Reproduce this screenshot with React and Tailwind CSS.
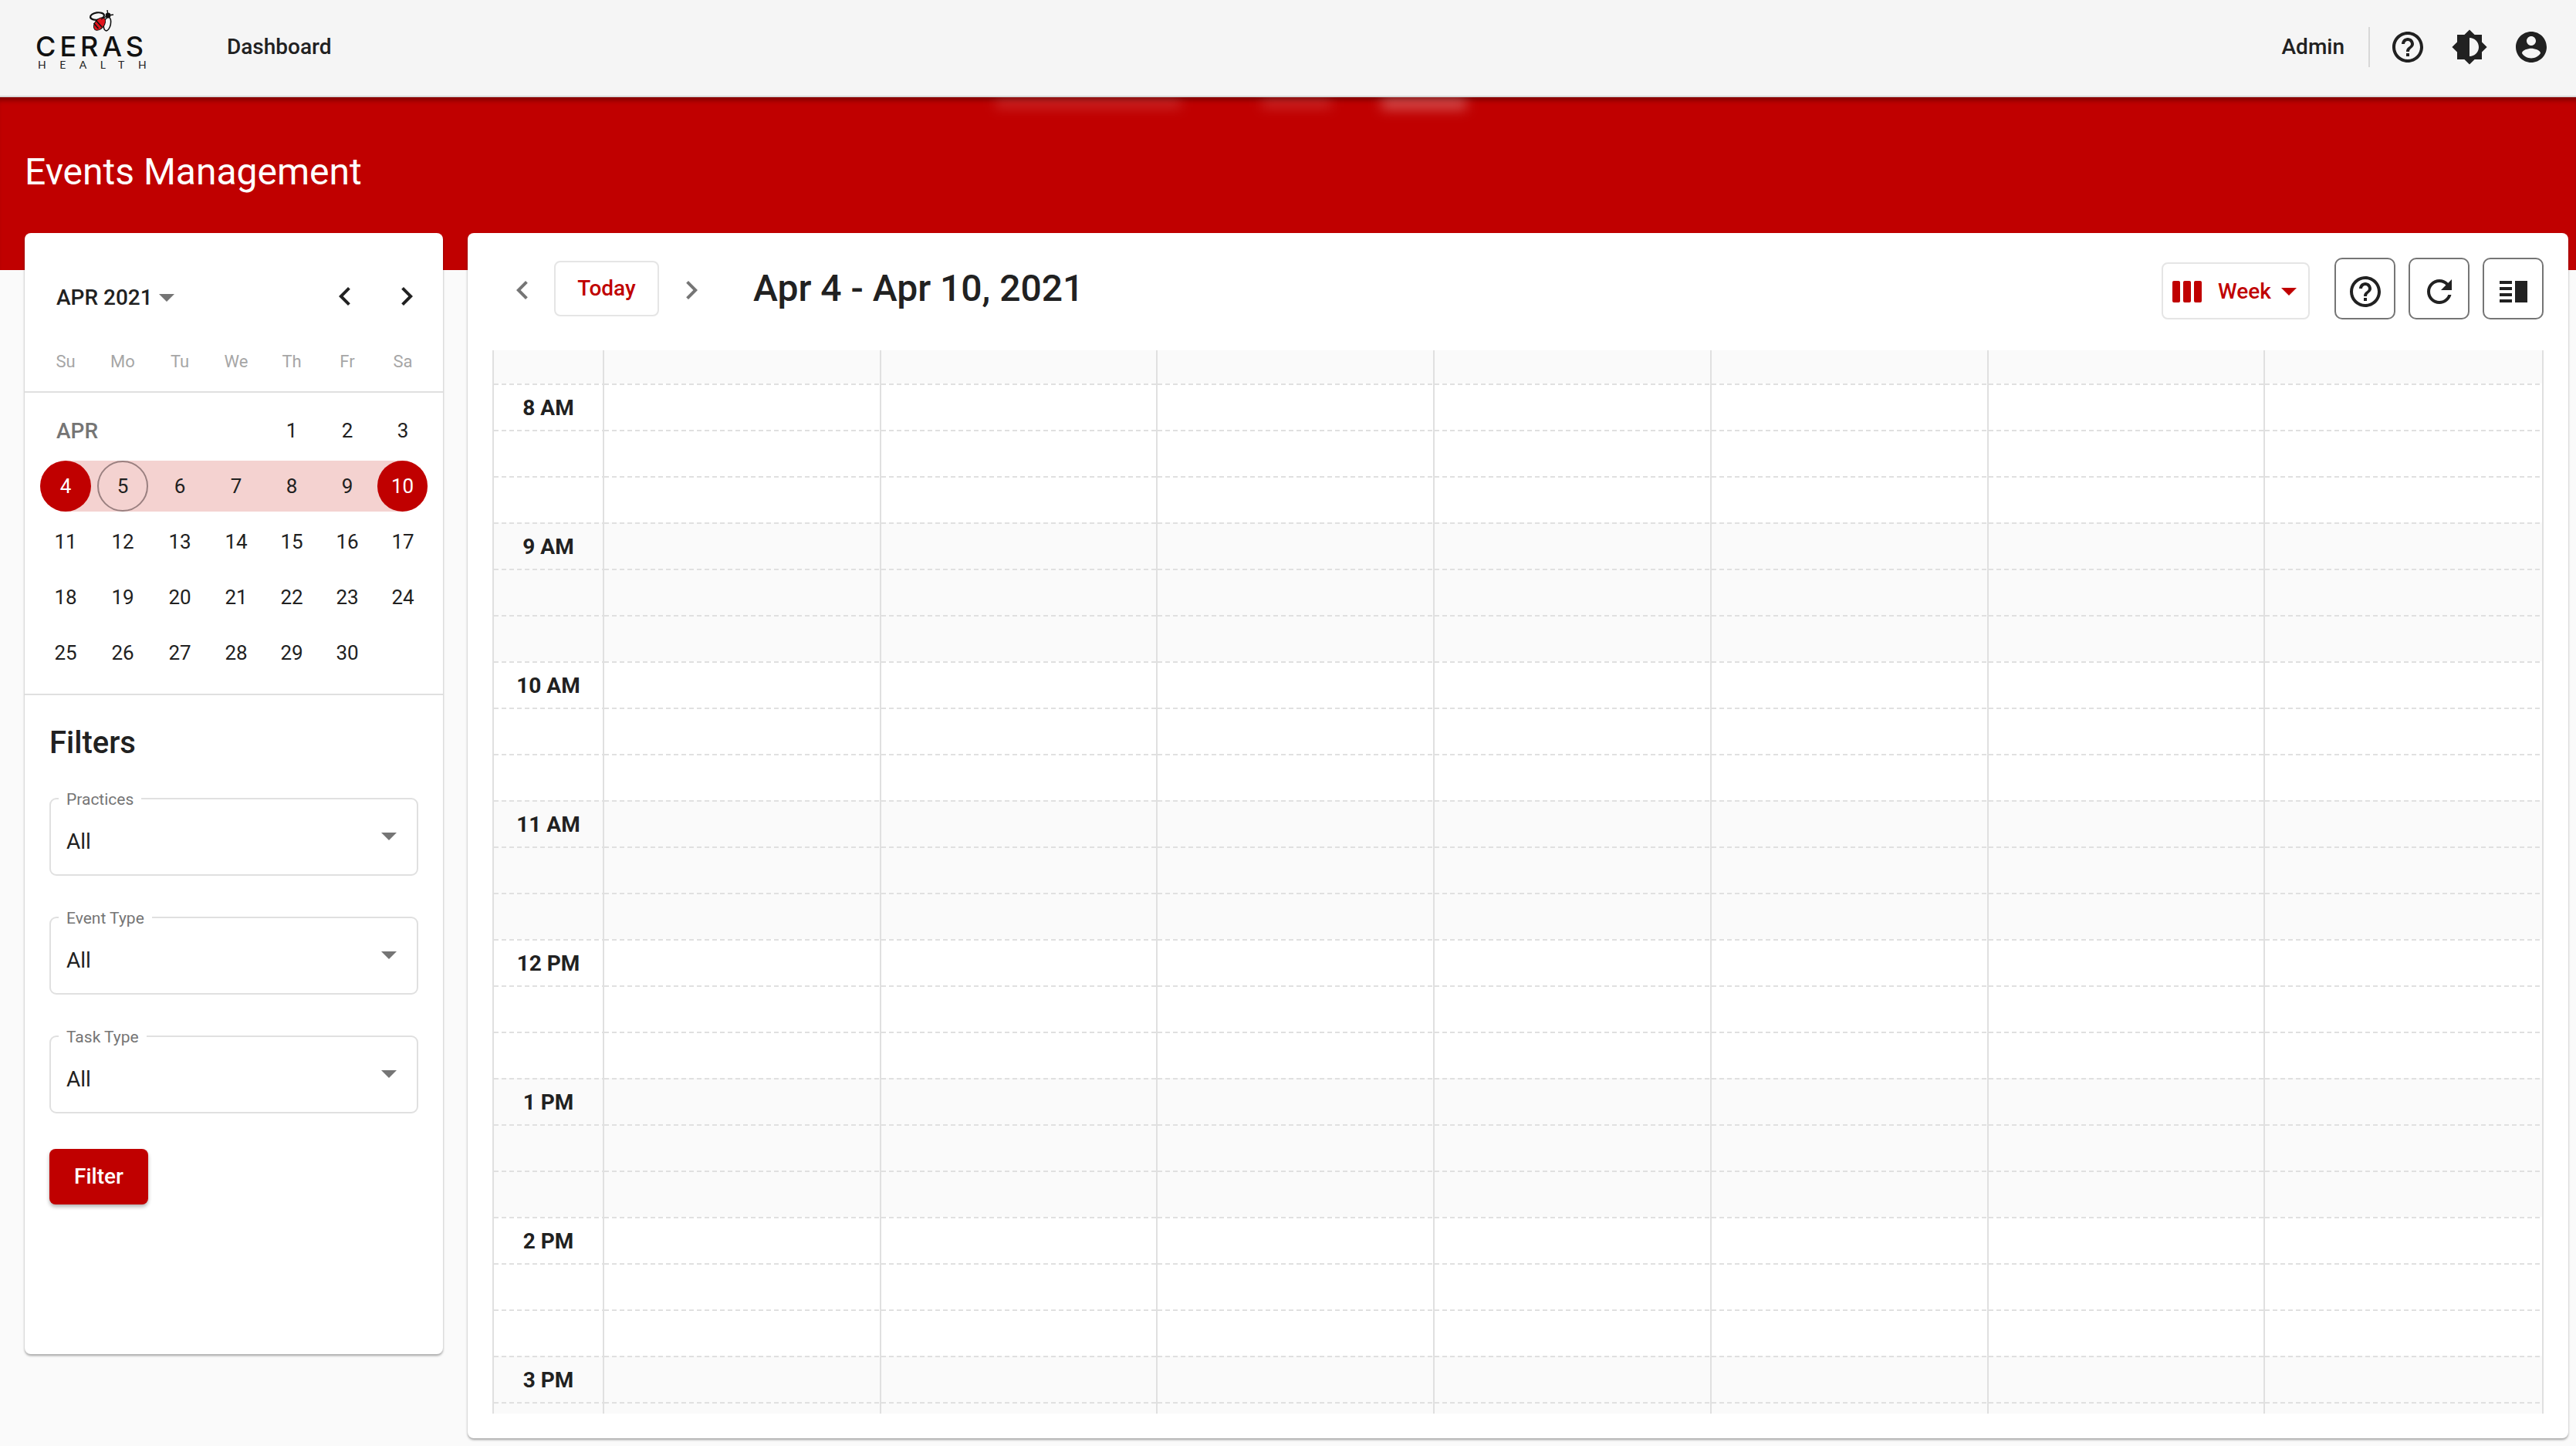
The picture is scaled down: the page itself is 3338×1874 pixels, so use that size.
const FONT = "font-['Roboto',sans-serif]";

const calendarRows = [
  ["APR", "", "", "", 1, 2, 3],
  [4, 5, 6, 7, 8, 9, 10],
  [11, 12, 13, 14, 15, 16, 17],
  [18, 19, 20, 21, 22, 23, 24],
  [25, 26, 27, 28, 29, 30, ""],
];
const weekDays = ["Su", "Mo", "Tu", "We", "Th", "Fr", "Sa"];
const calCols = "grid grid-cols-[74px_74px_74px_72px_72px_72px_72px]";

const Icon = ({ d, className = "", evenodd }) => (
  <svg viewBox="0 0 24 24" className={`w-[48px] h-[48px] fill-current ${className}`}>
    <path d={d} fillRule={evenodd ? "evenodd" : "nonzero"} />
  </svg>
);

const HELP = "M11 18h2v-2h-2v2zm1-16C6.48 2 2 6.48 2 12s4.48 10 10 10 10-4.48 10-10S17.52 2 12 2zm0 18c-4.41 0-8-3.59-8-8s3.59-8 8-8 8 3.59 8 8-3.59 8-8 8zm0-14c-2.21 0-4 1.79-4 4h2c0-1.1.9-2 2-2s2 .9 2 2c0 2-3 1.75-3 5h2c0-2.25 3-2.5 3-5 0-2.21-1.79-4-4-4z";
const BRIGHT = "M20 15.31L23.31 12 20 8.69V4h-4.69L12 .69 8.69 4H4v4.69L.69 12 4 15.31V20h4.69L12 23.31 15.31 20H20v-4.69zM12 18V6c3.31 0 6 2.69 6 6s-2.69 6-6 6z";
const ACCOUNT = "M12 2C6.48 2 2 6.48 2 12s4.48 10 10 10 10-4.48 10-10S17.52 2 12 2zm0 3c1.66 0 3 1.34 3 3s-1.34 3-3 3-3-1.34-3-3 1.34-3 3-3zm0 14.2c-2.5 0-4.71-1.28-6-3.22.03-1.99 4-3.08 6-3.08 1.99 0 5.97 1.09 6 3.08-1.29 1.94-3.5 3.22-6 3.22z";
const REFRESH = "M17.65 6.35C16.2 4.9 14.21 4 12 4c-4.42 0-7.99 3.58-7.99 8s3.57 8 7.99 8c3.73 0 6.84-2.55 7.73-6h-2.08c-.82 2.33-3.04 4-5.65 4-3.31 0-6-2.69-6-6s2.69-6 6-6c1.66 0 3.14.69 4.22 1.78L13 11h7V4l-2.35 2.35z";
const SPLIT = "M3 15h8v-2H3v2zm0 4h8v-2H3v2zm0-8h8V9H3v2zm0-6v2h8V5H3zm10 0h8v14h-8V5z";
const CHEV_L = "M15.41 7.41L14 6l-6 6 6 6 1.41-1.41L10.83 12z";
const CHEV_R = "M10 6L8.59 7.41 13.17 12l-4.58 4.59L10 18l6-6z";

const Caret = ({ className = "border-t-[#757575]" }) => (
  <span className={`block w-0 h-0 border-x-[10px] border-x-transparent border-t-[10px] ${className}`} />
);

function Logo() {
  return (
    <div className="self-start w-[150px] ml-[46px] flex flex-col items-start text-[#111]">
      <svg viewBox="0 0 60 45" className="w-[60px] h-[45px] ml-[54px] mt-[5px]">
        <ellipse cx="26" cy="16" rx="9" ry="4.6" fill="#f5f5f5" stroke="#111" strokeWidth="2.2" transform="rotate(-8 26 16)" />
        <ellipse cx="39" cy="26" rx="4.4" ry="9" fill="#f5f5f5" stroke="#111" strokeWidth="1.6" transform="rotate(12 39 26)" />
        <ellipse cx="29" cy="26" rx="6" ry="9.5" fill="#e0141c" stroke="#111" strokeWidth="1" transform="rotate(40 29 26)" />
        <path d="M24 21l8 9M21.5 25l6 7" stroke="#111" strokeWidth="1.6" />
        <circle cx="40" cy="15" r="3.4" fill="#111" />
        <path d="M40 15L39 8M40 15l7-1M40 15l-9 5" stroke="#111" strokeWidth="1.4" fill="none" />
      </svg>
      <div className="font-['Inter',sans-serif] font-medium text-[36px] leading-[26px] tracking-[5px] mt-[-3px] whitespace-nowrap">CERAS</div>
      <div className="font-['Lato',sans-serif] text-[14px] leading-[10px] tracking-[17.5px] ml-[3px] mt-[6px] text-[#222] whitespace-nowrap">HEALTH</div>
    </div>
  );
}

function Header() {
  return (
    <header className="relative z-10 h-[126px] bg-[#f5f5f5] border-b-2 border-[#d9d9d9] flex items-center text-[#212121]">
      <Logo />
      <span className="ml-[98px] text-[28px] font-medium leading-none mt-[-3px]">Dashboard</span>
      <div className="ml-auto flex items-center mt-[-2px]">
        <span className="text-[28px] font-medium leading-none">Admin</span>
        <span className="w-[2px] h-[52px] bg-[#d8d8d8] ml-[31px] mr-[25px]" />
        <Icon d={HELP} />
        <Icon d={BRIGHT} className="ml-[32px]" evenodd />
        <Icon d={ACCOUNT} className="ml-[32px] mr-[34px]" />
      </div>
    </header>
  );
}

function MiniCalendar() {
  return (
    <div className="text-[#212121]">
      <div className="flex items-center h-[68px] mt-[50px] pl-[41px]">
        <span className="text-[28px] font-medium leading-none">APR 2021</span>
        <span className="ml-[8px]"><Caret /></span>
        <Icon d={CHEV_L} className="ml-auto mr-[32px] -translate-y-[2px]" />
        <Icon d={CHEV_R} className="mr-[23px] -translate-y-[2px]" />
      </div>
      <div className={`${calCols} px-[16px] h-[50px] items-center text-center text-[22px] text-[#a6a6a6] mt-[23px] pb-[14px] box-content`}>
        {weekDays.map((d) => <span key={d}>{d}</span>)}
      </div>
      <div className="border-t-2 border-[#e0e0e0] pt-[13px] pb-[17px] px-[16px]">
        {calendarRows.map((row, i) => (
          <div key={i} className={`${calCols} h-[72px] items-center text-center text-[26px]`}>
            {row.map((v, j) => {
              if (v === "APR") return <span key={j} className="text-left pl-[25px] text-[28px] font-medium text-[#757575] mt-[2px]">APR</span>;
              const start = v === 4, end = v === 10, ranged = i === 1;
              return (
                <div key={j} className={`relative h-[66px] flex items-center ${start ? "justify-start" : end ? "justify-end" : "justify-center"} ${ranged ? "bg-[#f4d2d0]" : ""} ${start ? "rounded-l-full ml-[4px]" : ""} ${end ? "rounded-r-full mr-[4px]" : ""}`}>
                  {start ? (
                    <span className="w-[66px] h-[66px] rounded-full bg-[#c00000] text-white flex items-center justify-center">{v}</span>
                  ) : end ? (
                    <span className="w-[65px] h-[66px] rounded-full bg-[#c00000] text-white flex items-center justify-center">{v}</span>
                  ) : v === 5 ? (
                    <span className="w-[66px] h-[66px] rounded-full border-2 border-[#9a8080] flex items-center justify-center">{v}</span>
                  ) : v}
                </div>
              );
            })}
          </div>
        ))}
      </div>
    </div>
  );
}

function SelectField({ label, className }) {
  return (
    <div className={`relative h-[101px] border-2 border-[#e0e0e0] rounded-[9px] flex items-center justify-between pl-[20px] pr-[26px] ${className}`}>
      <span className="absolute left-[10px] top-[-13px] px-[10px] bg-white text-[21px] leading-[26px] text-[#757575]">{label}</span>
      <span className="text-[28px] leading-none text-[#212121] mt-[13px]">All</span>
      <span className="mt-[-2px]"><Caret /></span>
    </div>
  );
}

function Filters() {
  return (
    <div className="border-t-2 border-[#e0e0e0] px-[32px] pt-[39px]">
      <h2 className="text-[40px] font-medium leading-[46px] text-[#212121]">Filters</h2>
      <SelectField label="Practices" className="mt-[48px]" />
      <SelectField label="Event Type" className="mt-[53px]" />
      <SelectField label="Task Type" className="mt-[53px]" />
      <button className="mt-[46px] w-[128px] h-[72px] rounded-[8px] bg-[#c00000] text-white text-[28px] font-medium shadow-[0_3px_5px_rgba(0,0,0,0.3)]">Filter</button>
    </div>
  );
}

function ToolButton({ d }) {
  return (
    <button className="w-[79px] h-[80px] border-2 border-[#757575] rounded-[10px] flex items-center justify-center text-[#212121]">
      <Icon d={d} className="translate-y-[4px]" />
    </button>
  );
}

function Toolbar() {
  return (
    <div className="h-[152px] flex items-center pl-[47px] pr-[32px] pb-[8px] text-[#212121]">
      <Icon d={CHEV_L} className="text-[#757575] mr-[17px] mt-[4px]" />
      <button className="w-[136px] h-[72px] border-2 border-[#e5e5e5] rounded-[8px] text-[#c00000] text-[28px] font-medium">Today</button>
      <Icon d={CHEV_R} className="text-[#757575] ml-[18px] mt-[4px]" />
      <h1 className="ml-[56px] text-[48px] font-medium leading-none">Apr 4 - Apr 10, 2021</h1>
      <div className="ml-auto flex items-center">
        <button className="w-[192px] h-[74px] mr-[32px] mt-[5px] pt-[3px] border-2 border-[#e5e5e5] rounded-[8px] flex items-center pl-[12px] text-[#c00000] text-[28px] font-medium">
          <span className="flex gap-[4px]">
            <i className="block w-[10px] h-[28px] rounded-[2px] bg-[#c00000]" />
            <i className="block w-[10px] h-[28px] rounded-[2px] bg-[#c00000]" />
            <i className="block w-[10px] h-[28px] rounded-[2px] bg-[#c00000]" />
          </span>
          <span className="ml-[21px]">Week</span>
          <span className="ml-[13px]"><Caret className="border-t-[#c00000]" /></span>
        </button>
        <div className="flex gap-[17px]">
          <ToolButton d={HELP} />
          <ToolButton d={REFRESH} />
          <ToolButton d={SPLIT} />
        </div>
      </div>
    </div>
  );
}

const hours = ["8 AM", "9 AM", "10 AM", "11 AM", "12 PM", "1 PM", "2 PM", "3 PM"];
const gridCols = "grid grid-cols-[143px_repeat(7,1fr)]";

function TimeGrid() {
  const rows = [];
  hours.forEach((h, i) => {
    for (let k = 0; k < 3; k++) rows.push({ label: k === 0 ? h : "", shaded: i % 2 === 1 });
  });
  return (
    <div className="mx-[32px] h-[1378px] border-l-2 border-r-2 border-[#e0e0e0] overflow-hidden">
      <div className={`${gridCols} h-[43px] bg-[#fafafa]`}>
        {Array.from({ length: 8 }).map((_, c) => (
          <div key={c} className="border-r-2 border-[#e0e0e0] last:border-r-0" />
        ))}
      </div>
      {rows.map((r, i) => (
        <div key={i} className={`${gridCols} h-[60px] ${r.shaded ? "bg-[#fafafa]" : "bg-white"}`}>
          {Array.from({ length: 8 }).map((_, c) => (
            <div key={c} className="relative border-r-2 border-[#e0e0e0] last:border-r-0 flex items-center justify-center pt-[3px] text-[28px] font-bold text-[#212121]">
              <span className="absolute inset-x-0 top-0 h-[2px] bg-[repeating-linear-gradient(90deg,#e0e0e0_0,#e0e0e0_6px,transparent_6px,transparent_10px)]" />
              {c === 0 ? r.label : ""}
            </div>
          ))}
        </div>
      ))}
    </div>
  );
}

export default function App() {
  return (
    <div className={`${FONT} relative w-[3338px] h-[1874px] overflow-hidden bg-[#fafafa]`}>
      <Header />
      <div className="relative h-[224px] bg-[#c00000] pl-[32px] pt-[69px] shadow-[inset_0_8px_6px_-4px_rgba(0,0,0,0.35)]">
        <div className="text-[48px] leading-[56px] text-white">Events Management</div>
        {/* light smudges under the top bar */}
        <span className="absolute left-[1290px] top-0 w-[240px] h-[14px] bg-white/15 blur-[8px]" />
        <span className="absolute left-[1635px] top-0 w-[90px] h-[14px] bg-white/15 blur-[8px]" />
        <span className="absolute left-[1790px] top-0 w-[110px] h-[16px] bg-white/30 blur-[8px]" />
      </div>
      <div className="relative flex gap-[32px] pl-[32px] mt-[-48px]">
        <aside className="w-[542px] h-[1453px] bg-white rounded-[8px] shadow-[0_2px_3px_rgba(0,0,0,0.35)]">
          <MiniCalendar />
          <Filters />
        </aside>
        <main className="w-[2722px] h-[1562px] bg-white rounded-[8px] shadow-[0_2px_3px_rgba(0,0,0,0.35)] flex flex-col">
          <Toolbar />
          <TimeGrid />
        </main>
      </div>
    </div>
  );
}
